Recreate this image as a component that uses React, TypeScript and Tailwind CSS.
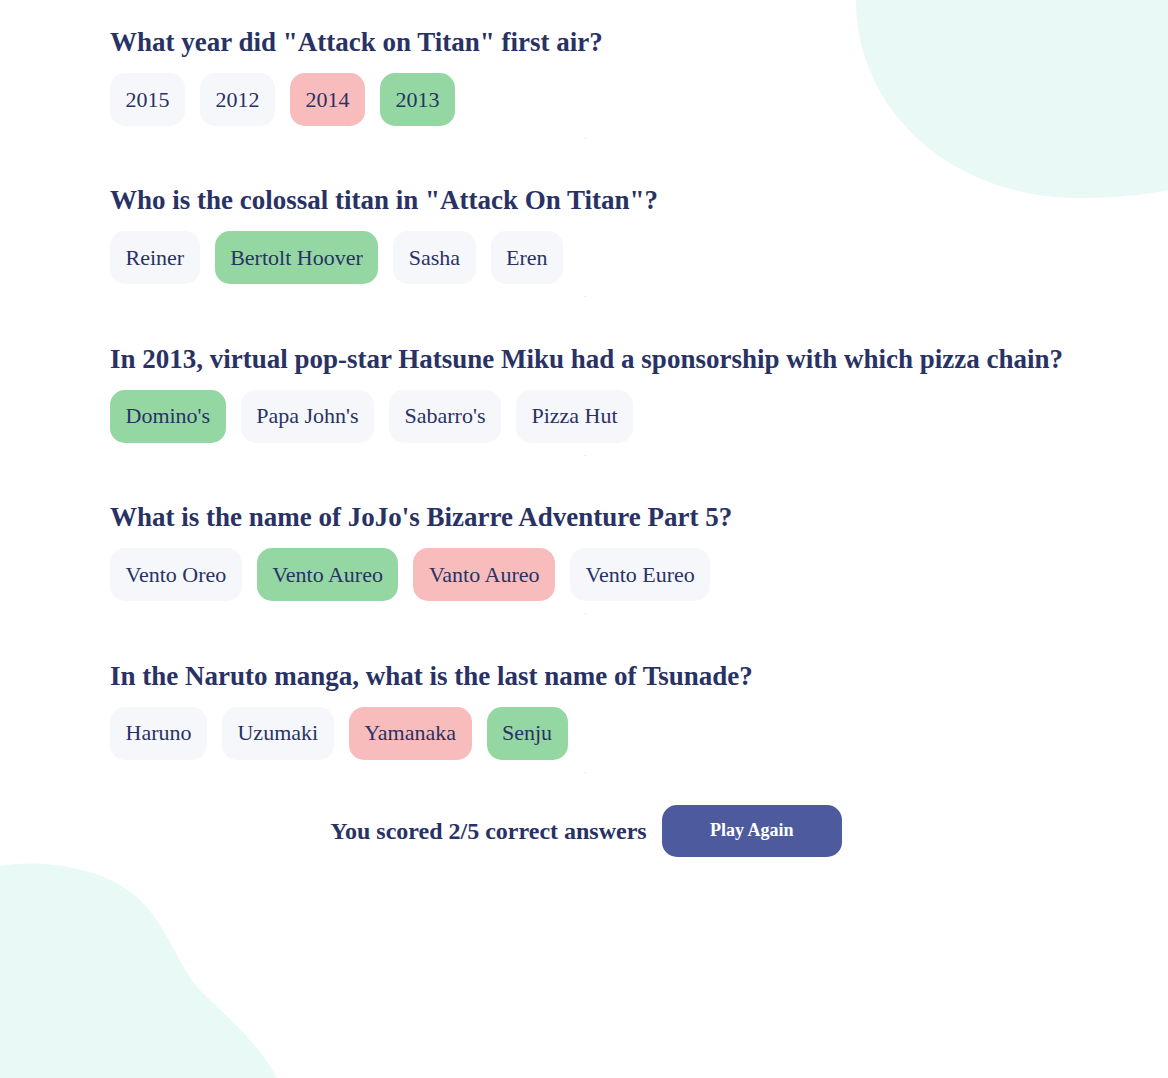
import React from 'react';

type Question = {
  question: string;
  answers: string[];
  correct: string;
  picked: string;
};

const questions: Question[] = [
  {
    question: 'What year did "Attack on Titan" first air?',
    answers: ['2015', '2012', '2014', '2013'],
    correct: '2013',
    picked: '2014',
  },
  {
    question: 'Who is the colossal titan in "Attack On Titan"?',
    answers: ['Reiner', 'Bertolt Hoover', 'Sasha', 'Eren'],
    correct: 'Bertolt Hoover',
    picked: 'Bertolt Hoover',
  },
  {
    question: 'In 2013, virtual pop-star Hatsune Miku had a sponsorship with which pizza chain?',
    answers: ["Domino's", "Papa John's", "Sabarro's", 'Pizza Hut'],
    correct: "Domino's",
    picked: "Domino's",
  },
  {
    question: "What is the name of JoJo's Bizarre Adventure Part 5?",
    answers: ['Vento Oreo', 'Vento Aureo', 'Vanto Aureo', 'Vento Eureo'],
    correct: 'Vento Aureo',
    picked: 'Vanto Aureo',
  },
  {
    question: 'In the Naruto manga, what is the last name of Tsunade?',
    answers: ['Haruno', 'Uzumaki', 'Yamanaka', 'Senju'],
    correct: 'Senju',
    picked: 'Yamanaka',
  },
];

const Blobs: React.FC = () => (
  <svg
    className="absolute inset-0 pointer-events-none"
    width="1168"
    height="1078"
    viewBox="0 0 1168 1078"
  >
    <path
      d="M856,0 C856,110 950,198 1080,198 C1120,198 1150,194 1168,190 L1168,0 Z"
      fill="#e9f9f5"
    />
    <path
      d="M0,866 C30,860 100,862 140,900 C170,930 180,970 200,990 C230,1020 260,1045 277,1078 L0,1078 Z"
      fill="#e9f9f5"
    />
  </svg>
);

const AnswerButton: React.FC<{ label: string; correct: boolean; wrong: boolean }> = ({
  label,
  correct,
  wrong,
}) => {
  const bg = correct ? 'bg-[#94d7a2]' : wrong ? 'bg-[#f8bcbc]' : 'bg-[#f5f7fb]';
  return (
    <button
      className={`h-[53px] px-[15.5px] rounded-[15px] text-[22px] leading-none text-[#293264] flex items-center ${bg}`}
    >
      {label}
    </button>
  );
};

export default function App() {
  const score = questions.filter(q => q.picked === q.correct).length;

  return (
    <div
      className="relative w-full h-[1078px] overflow-hidden bg-white text-[#293264]"
      style={{ fontFamily: '"Liberation Serif", "Times New Roman", serif' }}
    >
      <Blobs />

      <div className="relative pt-[27px]">
        {questions.map(q => (
          <div key={q.question}>
            <div className="pl-[110px]">
              <h2 className="text-[27px] font-bold leading-[31px] whitespace-nowrap">{q.question}</h2>
              <div className="flex gap-[15px] mt-[15px]">
                {q.answers.map(a => (
                  <AnswerButton
                    key={a}
                    label={a}
                    correct={a === q.correct}
                    wrong={a === q.picked && a !== q.correct}
                  />
                ))}
              </div>
            </div>
            {/* divider */}
            <div className="flex justify-center mt-[12px] mb-[46.4px]">
              <div className="w-[1px] h-[1px] bg-[#cfd3ea] translate-x-[1px]" />
            </div>
          </div>
        ))}

        {/* Score */}
        <div className="flex items-center justify-center gap-[15px] -mt-[14px] pl-[4px]">
          <span className="text-[24px] font-bold">
            You scored {score}/{questions.length} correct answers
          </span>
          <button className="w-[180px] h-[52px] rounded-[15px] bg-[#4d5b9e] text-white text-[18px] font-bold">
            Play Again
          </button>
        </div>
      </div>
    </div>
  );
}
